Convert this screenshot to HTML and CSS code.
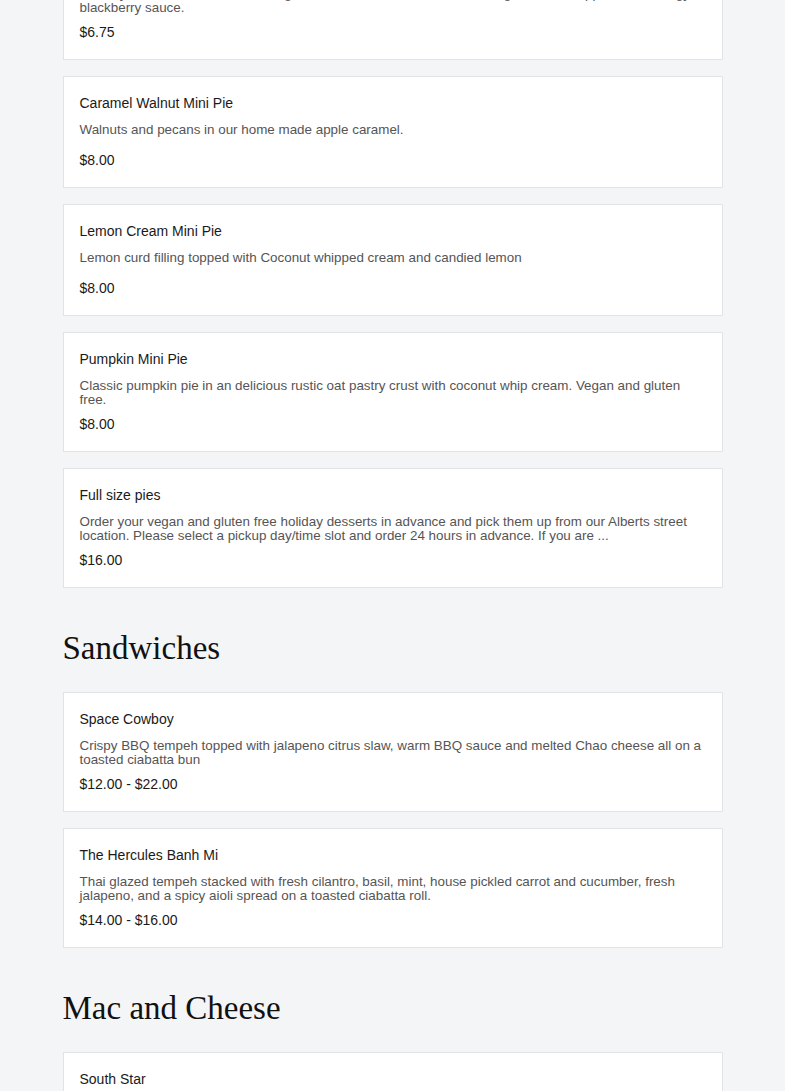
FILE: index.html
```html
<!DOCTYPE html>
<html>
<head>
<meta charset="utf-8">
<link rel="stylesheet" href="styles.css">
</head>
<body>
<main class="menu">
  <section class="category first">
    <div class="items">
      <article class="item">
        <h3 class="item-name">Blackberry Cheesecake Bar</h3>
        <p class="item-desc">Creamy cashew cheesecake on a gluten free almond crust, baked until golden and topped with a tangy blackberry sauce.</p>
        <p class="item-price">$6.75</p>
      </article>
      <article class="item">
        <h3 class="item-name">Caramel Walnut Mini Pie</h3>
        <p class="item-desc">Walnuts and pecans in our home made apple caramel.</p>
        <p class="item-price">$8.00</p>
      </article>
      <article class="item">
        <h3 class="item-name">Lemon Cream Mini Pie</h3>
        <p class="item-desc">Lemon curd filling topped with Coconut whipped cream and candied lemon</p>
        <p class="item-price">$8.00</p>
      </article>
      <article class="item">
        <h3 class="item-name">Pumpkin Mini Pie</h3>
        <p class="item-desc">Classic pumpkin pie in an delicious rustic oat pastry crust with coconut whip cream. Vegan and gluten free.</p>
        <p class="item-price">$8.00</p>
      </article>
      <article class="item">
        <h3 class="item-name">Full size pies</h3>
        <p class="item-desc">Order your vegan and gluten free holiday desserts in advance and pick them up from our Alberts street location. Please select a pickup day/time slot and order 24 hours in advance. If you are ...</p>
        <p class="item-price">$16.00</p>
      </article>
    </div>
  </section>
  <section class="category">
    <h2 class="category-title">Sandwiches</h2>
    <div class="items">
      <article class="item">
        <h3 class="item-name">Space Cowboy</h3>
        <p class="item-desc">Crispy BBQ tempeh topped with jalapeno citrus slaw, warm BBQ sauce and melted Chao cheese all on a toasted ciabatta bun</p>
        <p class="item-price">$12.00 - $22.00</p>
      </article>
      <article class="item">
        <h3 class="item-name">The Hercules Banh Mi</h3>
        <p class="item-desc">Thai glazed tempeh stacked with fresh cilantro, basil, mint, house pickled carrot and cucumber, fresh jalapeno, and a spicy aioli spread on a toasted ciabatta roll.</p>
        <p class="item-price">$14.00 - $16.00</p>
      </article>
    </div>
  </section>
  <section class="category">
    <h2 class="category-title">Mac and Cheese</h2>
    <div class="items">
      <article class="item">
        <h3 class="item-name">South Star</h3>
        <p class="item-desc">Creamy cashew cheese sauce with elbow macaroni and roasted vegetables.</p>
        <p class="item-price">$12.00</p>
      </article>
    </div>
  </section>
</main>
</body>
</html>
```

FILE: styles.css
```css
html, body {
  margin: 0;
  padding: 0;
  background: #f4f5f7;
}
body {
  font-family: "Liberation Sans", Arial, sans-serif;
  color: #1f1f1f;
  overflow: hidden;
}
.menu {
  width: 660px;
  margin: -60px auto 0;
}
.category-title {
  font-family: "Liberation Serif", "Times New Roman", serif;
  font-weight: normal;
  font-size: 33px;
  line-height: 40px;
  color: #111;
  margin: 40px 0 24px;
}
.items {
  display: flex;
  flex-direction: column;
  gap: 16px;
}
.item {
  background: #fff;
  border: 1px solid #e1e3e6;
  padding: 16px 16px 17px;
}
.item-name {
  margin: 0;
  font-size: 14px;
  font-weight: normal;
  line-height: 20px;
  color: #1a1a1a;
}
.item-desc {
  margin: 10px 0 0;
  font-size: 13.4px;
  line-height: 14px;
  min-height: 20px;
  color: #555;
}
.item-price {
  margin: 7px 0 0;
  font-size: 14px;
  line-height: 20px;
  color: #1a1a1a;
}
```
